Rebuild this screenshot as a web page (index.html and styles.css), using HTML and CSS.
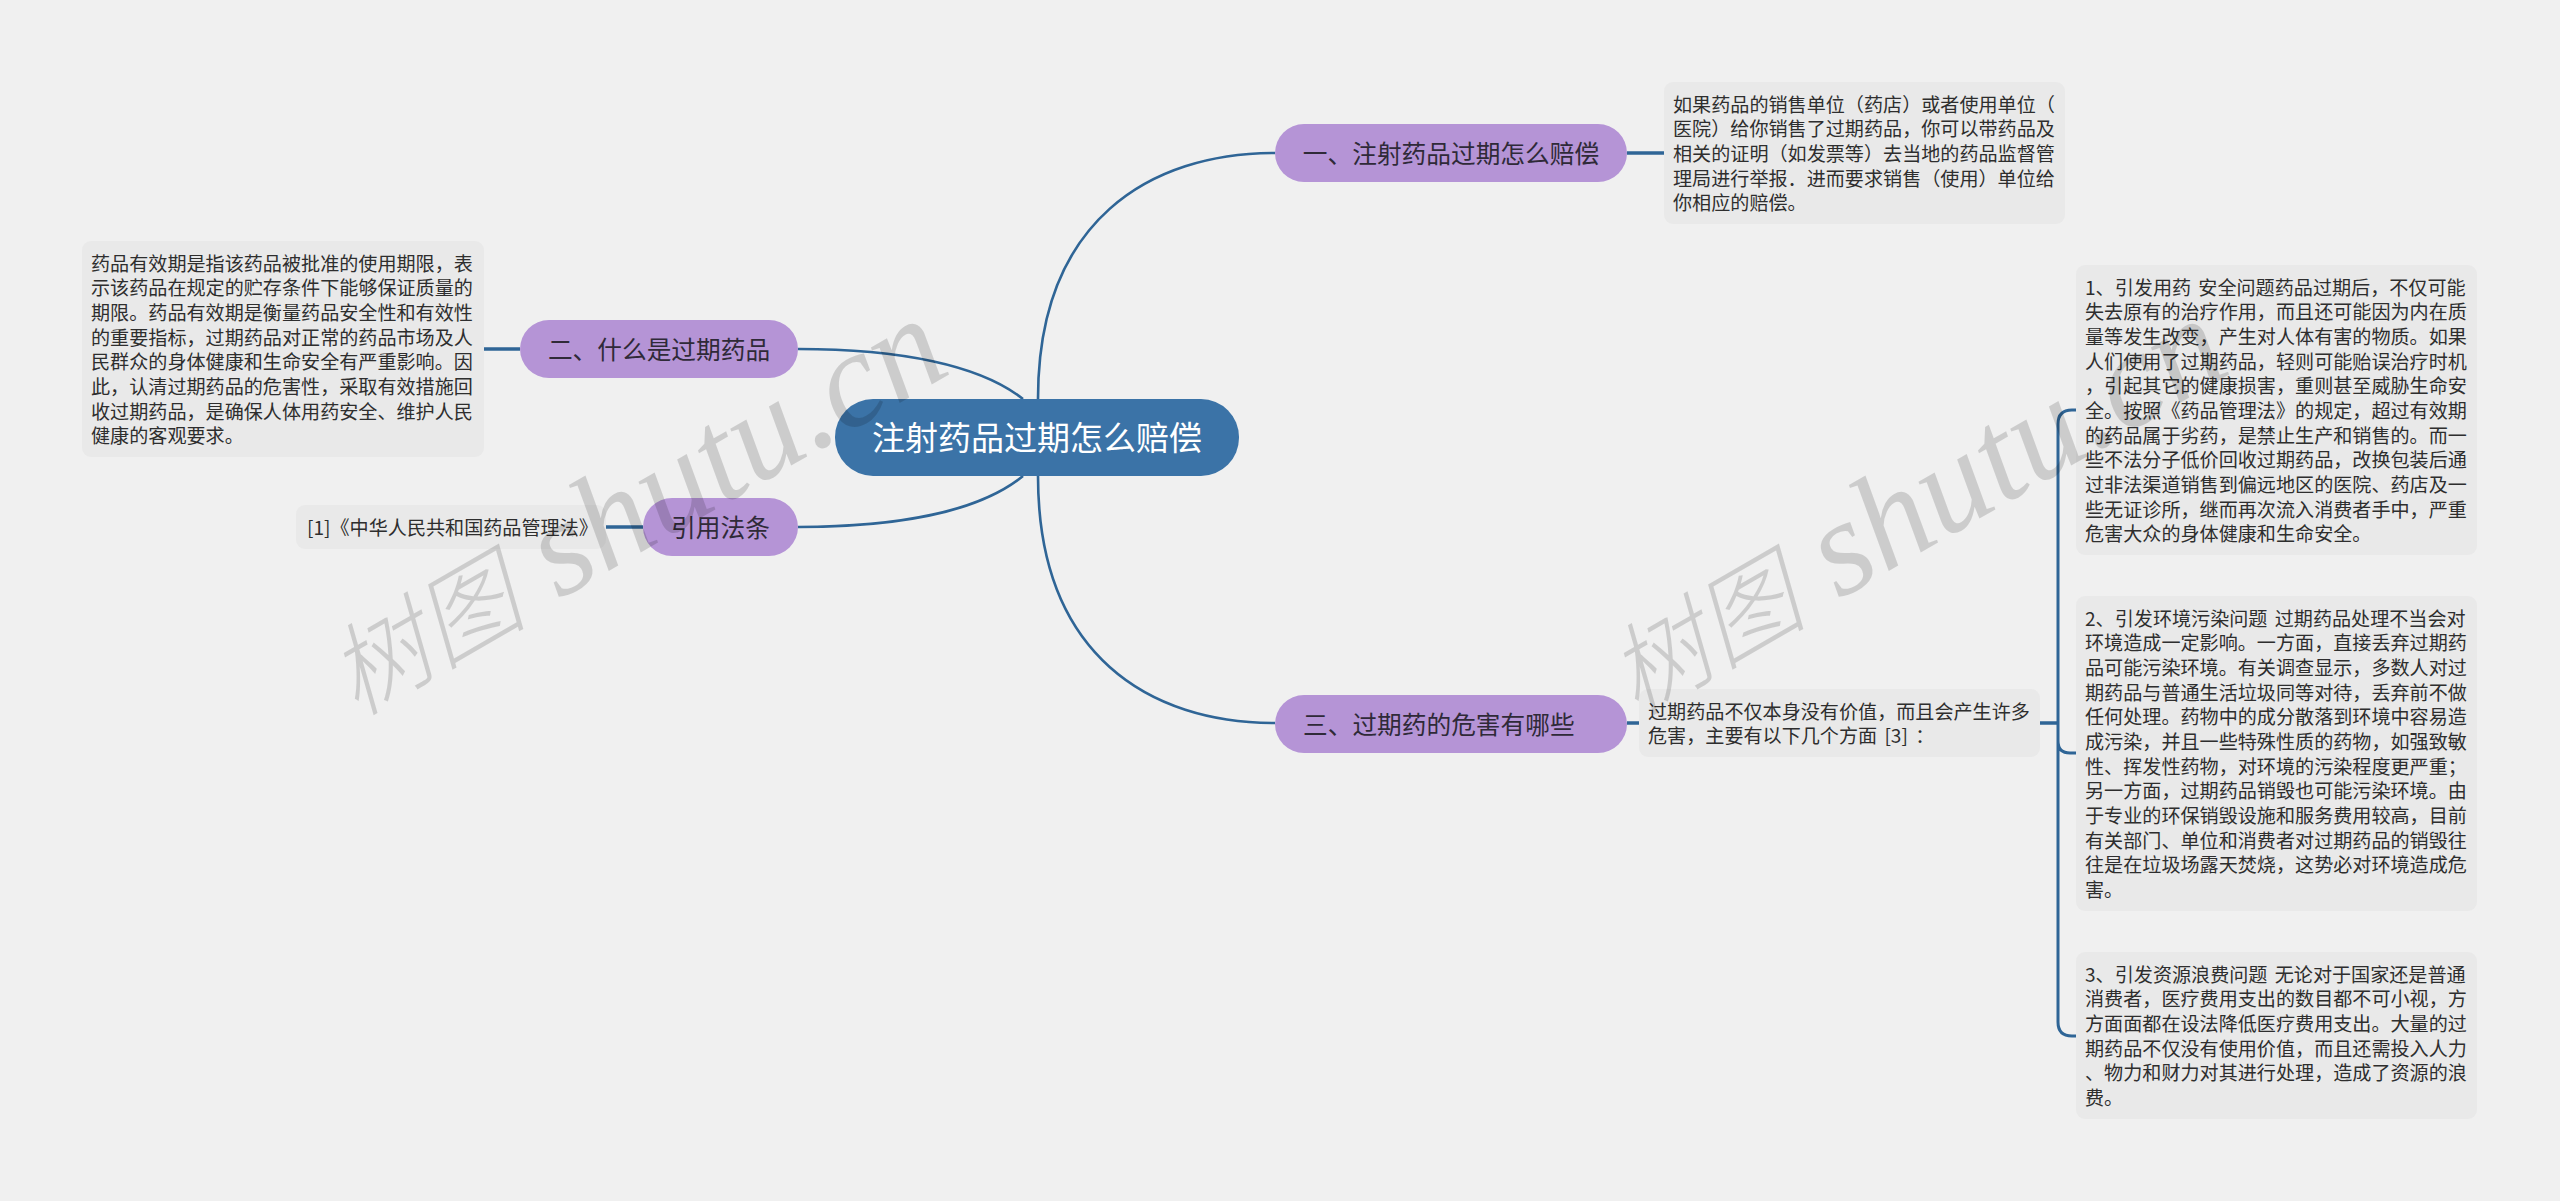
FILE: index.html
```html
<!DOCTYPE html>
<html lang="zh-CN">
<head>
<meta charset="utf-8">
<title>注射药品过期怎么赔偿</title>
<link rel="stylesheet" href="styles.css">
</head>
<body>
<main class="map">
  <svg class="links" width="2560" height="1201" viewBox="0 0 2560 1201" aria-hidden="true">
    <path class="curve" d="M1038 399C1038 220 1150 153 1275 153"/>
    <path class="curve" d="M1038 476C1038 656 1150 723 1275 723"/>
    <path class="curve" d="M798 349C900 349 980 365 1023 399"/>
    <path class="curve" d="M798 527C900 527 980 511 1023 476"/>
    <path class="stub" d="M1627 153H1664M484 349H520M606 527H643M1627 723H1639M2040 723H2058"/>
    <path class="bracket" d="M2076 410H2072Q2058 410 2058 424V1022Q2058 1036 2072 1036H2076M2058 741Q2058 753 2070 753H2076"/>
  </svg>

  <div class="root">注射药品过期怎么赔偿</div>

  <div class="topic topic-one">一、注射药品过期怎么赔偿</div>
  <div class="topic topic-two">二、什么是过期药品</div>
  <div class="topic topic-cite">引用法条</div>
  <div class="topic topic-three">三、过期药的危害有哪些</div>

  <p class="note note-one">如果药品的销售单位（药店）或者使用单位（<br>医院）给你销售了过期药品，你可以带药品及<br>相关的证明（如发票等）去当地的药品监督管<br>理局进行举报．进而要求销售（使用）单位给<br>你相应的赔偿。</p>

  <p class="note note-two">药品有效期是指该药品被批准的使用期限，表<br>示该药品在规定的贮存条件下能够保证质量的<br>期限。药品有效期是衡量药品安全性和有效性<br>的重要指标，过期药品对正常的药品市场及人<br>民群众的身体健康和生命安全有严重影响。因<br>此，认清过期药品的危害性，采取有效措施回<br>收过期药品，是确保人体用药安全、维护人民<br>健康的客观要求。</p>

  <p class="note note-cite">[1]《中华人民共和国药品管理法》</p>

  <p class="note note-three">过期药品不仅本身没有价值，而且会产生许多<br>危害，主要有以下几个方面 [3] ：</p>

  <p class="note note-a">1、引发用药 安全问题药品过期后，不仅可能<br>失去原有的治疗作用，而且还可能因为内在质<br>量等发生改变，产生对人体有害的物质。如果<br>人们使用了过期药品，轻则可能贻误治疗时机<br>，引起其它的健康损害，重则甚至威胁生命安<br>全。按照《药品管理法》的规定，超过有效期<br>的药品属于劣药，是禁止生产和销售的。而一<br>些不法分子低价回收过期药品，改换包装后通<br>过非法渠道销售到偏远地区的医院、药店及一<br>些无证诊所，继而再次流入消费者手中，严重<br>危害大众的身体健康和生命安全。</p>

  <p class="note note-b">2、引发环境污染问题 过期药品处理不当会对<br>环境造成一定影响。一方面，直接丢弃过期药<br>品可能污染环境。有关调查显示，多数人对过<br>期药品与普通生活垃圾同等对待，丢弃前不做<br>任何处理。药物中的成分散落到环境中容易造<br>成污染，并且一些特殊性质的药物，如强致敏<br>性、挥发性药物，对环境的污染程度更严重；<br>另一方面，过期药品销毁也可能污染环境。由<br>于专业的环保销毁设施和服务费用较高，目前<br>有关部门、单位和消费者对过期药品的销毁往<br>往是在垃圾场露天焚烧，这势必对环境造成危<br>害。</p>

  <p class="note note-c">3、引发资源浪费问题 无论对于国家还是普通<br>消费者，医疗费用支出的数目都不可小视，方<br>方面面都在设法降低医疗费用支出。大量的过<br>期药品不仅没有使用价值，而且还需投入人力<br>、物力和财力对其进行处理，造成了资源的浪<br>费。</p>

  <div class="mark mark-left"><span class="mark-cjk">树图</span> shutu.cn</div>
  <div class="mark mark-right"><span class="mark-cjk">树图</span> shutu.cn</div>
</main>
</body>
</html>
```

FILE: styles.css
```css
* {
  box-sizing: border-box;
}

html,
body {
  margin: 0;
  padding: 0;
  background: #f0f0f0;
}

.map {
  position: relative;
  width: 2560px;
  height: 1201px;
  overflow: hidden;
  background: #f0f0f0;
  font-family: "Noto Sans CJK SC", "Noto Sans", sans-serif;
}

.links {
  position: absolute;
  left: 0;
  top: 0;
}

.links path {
  fill: none;
  stroke: #2f6596;
}

.links .curve {
  stroke-width: 2.6;
}

.links .stub {
  stroke-width: 3.6;
}

.links .bracket {
  stroke-width: 3;
}

.root {
  position: absolute;
  left: 835px;
  top: 399px;
  width: 404px;
  height: 77px;
  padding-bottom: 3px;
  display: flex;
  align-items: center;
  justify-content: center;
  border-radius: 38px;
  background: #3b73a7;
  color: #fff;
  font-size: 33px;
  white-space: nowrap;
}

.topic {
  position: absolute;
  height: 58px;
  padding-bottom: 3px;
  display: flex;
  align-items: center;
  justify-content: center;
  border-radius: 29px;
  background: #b594d6;
  color: #2f2a38;
  font-size: 24.7px;
  white-space: nowrap;
}

.topic-one {
  left: 1275px;
  top: 124px;
  width: 352px;
}

.topic-two {
  left: 520px;
  top: 320px;
  width: 278px;
}

.topic-cite {
  left: 643px;
  top: 498px;
  width: 155px;
}

.topic-three {
  left: 1275px;
  top: 695px;
  width: 352px;
  padding-left: 28px;
  justify-content: flex-start;
}

.note {
  position: absolute;
  margin: 0;
  padding: 9.5px 9px;
  border-radius: 9px;
  background: #e9e9e9;
  color: #2e2e2e;
  font-size: 19.1px;
  line-height: 24.67px;
  word-spacing: 3px;
  white-space: nowrap;
}

.note-one {
  left: 1664px;
  top: 82px;
  width: 401px;
}

.note-two {
  left: 82px;
  top: 241px;
  width: 402px;
}

.note-cite {
  left: 296px;
  top: 505px;
  width: 310px;
  padding-left: 11px;
}

.note-three {
  left: 1639px;
  top: 689px;
  width: 401px;
}

.note-a {
  left: 2076px;
  top: 265px;
  width: 401px;
}

.note-b {
  left: 2076px;
  top: 596px;
  width: 401px;
}

.note-c {
  left: 2076px;
  top: 952px;
  width: 401px;
}

.mark {
  position: absolute;
  top: 600px;
  color: rgba(0, 0, 0, 0.15);
  font-family: "Liberation Serif", "Noto Sans CJK SC", serif;
  font-size: 136px;
  font-style: italic;
  line-height: 136px;
  white-space: nowrap;
  transform: rotate(-30deg);
  transform-origin: left bottom;
  pointer-events: none;
}

.mark-cjk {
  font-size: 100px;
  font-weight: 300;
  line-height: 0;
}

.mark-left {
  left: 367px;
}

.mark-right {
  left: 1647px;
}
```
